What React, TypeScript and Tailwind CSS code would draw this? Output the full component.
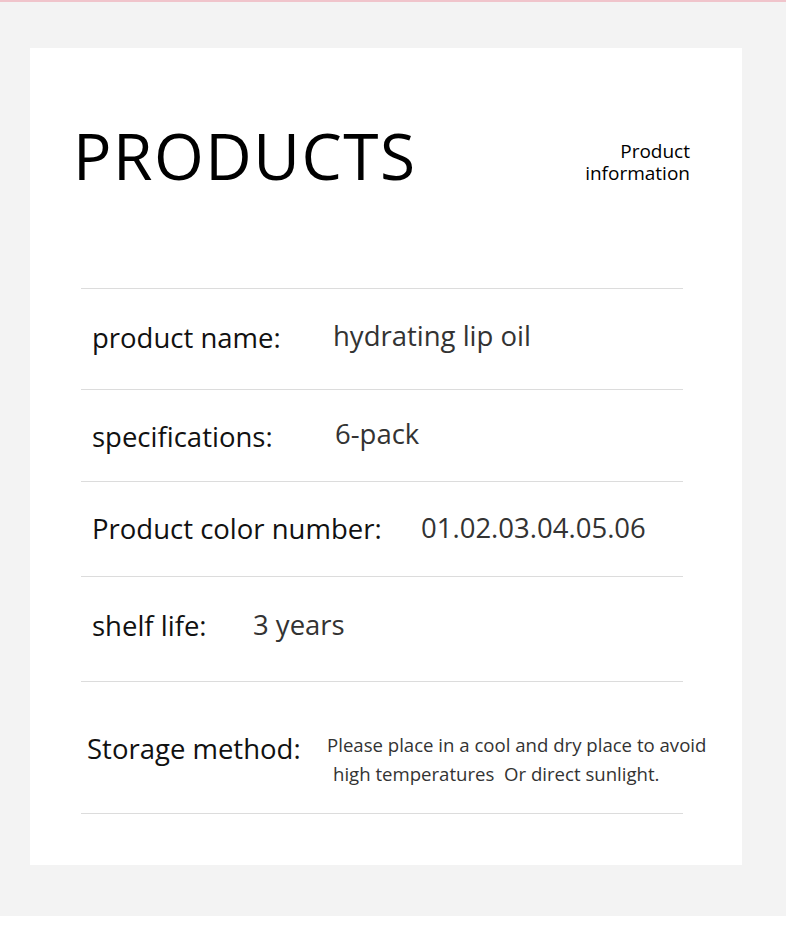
const rows = [
  { label: 'product name:', value: 'hydrating lip oil', h: 'h-[101px]', lw: 'w-[241px]', lp: 'pb-[3px]', vp: 'pb-[6px]' },
  { label: 'specifications:', value: '6-pack', h: 'h-[92px]', lw: 'w-[243px]', lp: 'pt-[3px]', vp: 'pb-[4px]' },
  { label: 'Product color number:', value: '01.02.03.04.05.06', h: 'h-[95px]', lw: 'w-[329px]', lp: 'pb-[1px]', vp: 'pb-[2px]' },
  { label: 'shelf life:', value: '3 years', h: 'h-[105px]', lw: 'w-[161px]', lp: 'pb-[7px]', vp: 'pb-[8px]' },
];

export default function App() {
  return (
    <div className="bg-white w-[790px] h-[930px]" style={{ fontFamily: '"Open Sans", "Noto Sans", sans-serif' }}>
      <div className="w-[786px] h-[916px] bg-[#f3f3f3] border-t-[2px] border-[#f0c4cb] pt-[46px] pl-[30px]">
        <div className="w-[712px] h-[817px] bg-white">
          {/* Header */}
          <div className="flex items-start justify-between pl-[43px] pr-[52px] pt-[68px] h-[240px]">
            <h1 className="text-[64px] leading-[80px] tracking-[1.5px] text-black font-normal">PRODUCTS</h1>
            <div className="text-right text-[19px] leading-[22px] text-black mt-[24px]">
              <div>Product</div>
              <div>information</div>
            </div>
          </div>

          {/* Table */}
          <div className="ml-[51px] w-[602px] border-t border-[#dcdcdc]">
            {rows.map((r) => (
              <div key={r.label} className={`${r.h} flex items-center border-b border-[#dcdcdc] pl-[11px]`}>
                <div className={`${r.lw} ${r.lp} shrink-0 text-[27.5px] text-[#111]`}>{r.label}</div>
                <div className={`${r.vp} text-[27.5px] text-[#333]`}>{r.value}</div>
              </div>
            ))}
            <div className="h-[132px] flex items-center border-b border-[#dcdcdc] pl-[6px]">
              <div className="w-[240px] shrink-0 text-[27.5px] text-[#111] self-start pt-[46px]">Storage method:</div>
              <div className="text-[18.6px] leading-[29px] text-[#333] whitespace-nowrap self-start pt-[48px]">
                <div>Please place in a cool and dry place to avoid</div>
                <div className="pl-[6px]">high temperatures&nbsp; Or direct sunlight.</div>
              </div>
            </div>
          </div>
        </div>
      </div>
    </div>
  );
}
